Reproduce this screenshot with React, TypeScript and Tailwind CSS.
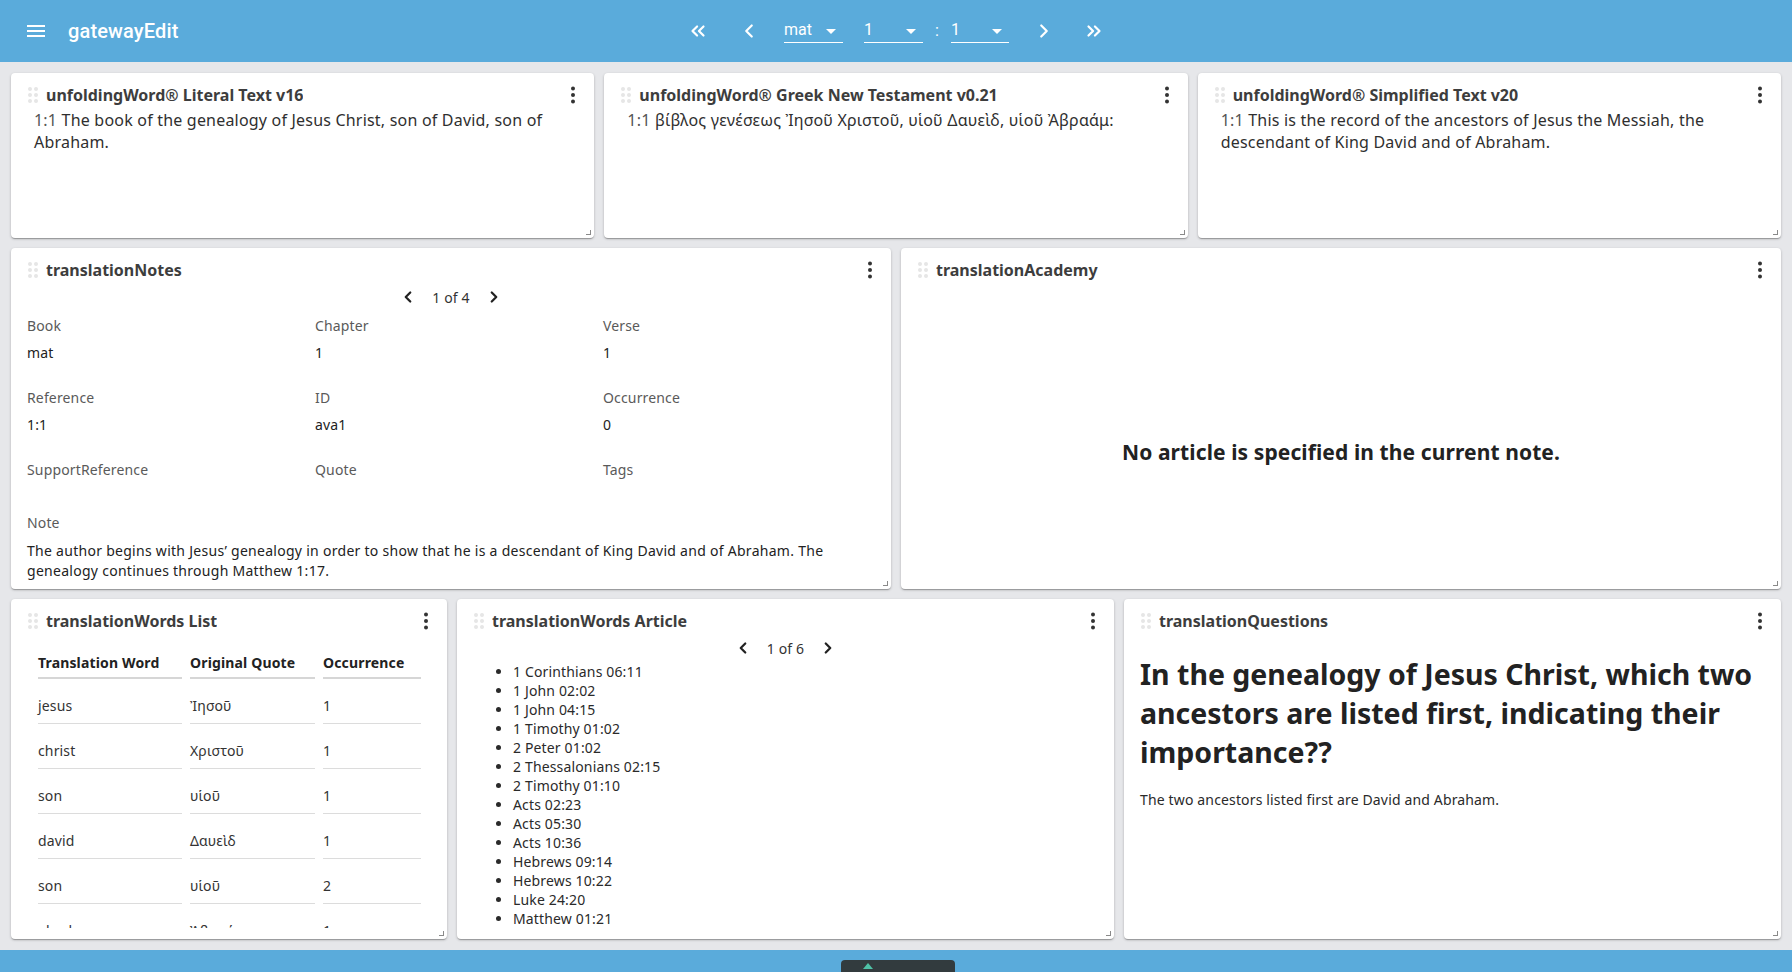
import { ChevronLeft, ChevronRight, ChevronsLeft, ChevronsRight } from 'lucide-react'
import type { ReactNode } from 'react'

const words = [
  { word: 'jesus', quote: 'Ἰησοῦ', occ: '1' },
  { word: 'christ', quote: 'Χριστοῦ', occ: '1' },
  { word: 'son', quote: 'υἱοῦ', occ: '1' },
  { word: 'david', quote: 'Δαυεὶδ', occ: '1' },
  { word: 'son', quote: 'υἱοῦ', occ: '2' },
  { word: 'abraham', quote: 'Ἀβραάμ', occ: '1' },
]

const refs = [
  '1 Corinthians 06:11',
  '1 John 02:02',
  '1 John 04:15',
  '1 Timothy 01:02',
  '2 Peter 01:02',
  '2 Thessalonians 02:15',
  '2 Timothy 01:10',
  'Acts 02:23',
  'Acts 05:30',
  'Acts 10:36',
  'Hebrews 09:14',
  'Hebrews 10:22',
  'Luke 24:20',
  'Matthew 01:21',
]

function MenuIcon() {
  return (
    <svg width="24" height="24" viewBox="0 0 24 24" fill="white">
      <path d="M3 18h18v-2H3zm0-5h18v-2H3zm0-7v2h18V6z" />
    </svg>
  )
}

function DropArrow() {
  return (
    <svg width="24" height="24" viewBox="0 0 24 24" fill="white" className="absolute right-0 top-1/2 -translate-y-1/2">
      <path d="M7 10l5 5 5-5z" />
    </svg>
  )
}

function MoreVert() {
  return (
    <svg width="24" height="24" viewBox="0 0 24 24" fill="#333">
      <circle cx="12" cy="5.5" r="2" />
      <circle cx="12" cy="12" r="2" />
      <circle cx="12" cy="18.5" r="2" />
    </svg>
  )
}

function DragHandle() {
  return (
    <div className="grid grid-cols-2 gap-[2px] shrink-0">
      {[0, 1, 2, 3, 4, 5].map((i) => (
        <span key={i} className="w-[4px] h-[4px] rounded-full bg-[#e6e6e6]" />
      ))}
    </div>
  )
}

function Select({ value, width }: { value: string; width: string }) {
  return (
    <div className={`relative h-[24px] border-b border-white flex items-center ${width}`}>
      <span className="text-[16px] leading-[20px] pb-[2px]">{value}</span>
      <DropArrow />
    </div>
  )
}

function Pager({ label }: { label: string }) {
  return (
    <div className="h-[30px] flex items-center justify-center text-[14px] tracking-[0.15px] text-[#333]">
      <span className="w-[32px] flex justify-center">
        <ChevronLeft size={18} strokeWidth={3} color="#222" />
      </span>
      <span className="px-[8px]">{label}</span>
      <span className="w-[32px] flex justify-center">
        <ChevronRight size={18} strokeWidth={3} color="#222" />
      </span>
    </div>
  )
}

function Card({
  title,
  children,
  className = '',
  pad = 'pb-[11px]',
}: {
  title: string
  children?: ReactNode
  className?: string
  pad?: string
}) {
  return (
    <div
      className={`relative bg-white rounded-[4px] shadow-[0_1px_3px_rgba(0,0,0,0.2),0_1px_1px_rgba(0,0,0,0.14),0_2px_1px_-1px_rgba(0,0,0,0.12)] flex flex-col ${pad} ${className}`}
    >
      {/* Card header */}
      <div className="h-[34px] pt-[10px] pl-[17px] pr-[9px] flex items-center shrink-0">
        <DragHandle />
        <span className="ml-[8px] text-[16px] leading-[24px] font-bold text-[#3d3d3d] truncate">{title}</span>
        <span className="ml-auto">
          <MoreVert />
        </span>
      </div>
      <div className="flex-1 min-h-0 overflow-hidden">{children}</div>
      {/* Resize handle */}
      <span className="absolute right-[3px] bottom-[3px] w-[5px] h-[5px] border-r border-b border-[#8a8a8a]" />
    </div>
  )
}

function Scripture({ text }: { text: string }) {
  return (
    <p className="pl-[23px] pr-[24px] pt-[2px] text-[16px] leading-[22px] tracking-[0.2px] text-[#2f2f2f]">
      <span className="text-[#555]">1:1</span> {text}
    </p>
  )
}

function Field({ label, value }: { label: string; value?: string }) {
  return (
    <div className={value ? 'pb-[25px]' : 'pb-[33px]'}>
      <div className="text-[14px] leading-[20px] tracking-[0.15px] text-[#5a5a5a]">{label}</div>
      {value ? <div className="mt-[7px] text-[14px] leading-[20px] tracking-[0.15px] text-[#222]">{value}</div> : null}
    </div>
  )
}

export default function App() {
  return (
    <div className="w-[1792px] h-[972px] bg-[#e6e7ea] overflow-hidden flex flex-col font-['Noto_Sans',sans-serif]">
      {/* App bar */}
      <header className="h-[62px] shrink-0 bg-[#5aabdb] grid grid-cols-[1fr_auto_1fr] items-center text-white font-['Roboto',sans-serif]">
        <div className="flex items-center pl-[24px]">
          <MenuIcon />
          <span className="ml-[20px] text-[20px] font-medium tracking-[0.15px]">gatewayEdit</span>
        </div>
        <nav className="flex items-center">
          <span className="w-[48px] h-[48px] flex items-center justify-center">
            <ChevronsLeft size={22} strokeWidth={2.4} />
          </span>
          <span className="ml-[3px] w-[48px] h-[48px] flex items-center justify-center">
            <ChevronLeft size={22} strokeWidth={2.4} />
          </span>
          <div className="ml-[11px]">
            <Select value="mat" width="w-[59px]" />
          </div>
          <div className="ml-[21px]">
            <Select value="1" width="w-[59px]" />
          </div>
          <span className="w-[28px] text-center text-[16px]">:</span>
          <Select value="1" width="w-[58px]" />
          <span className="ml-[11px] w-[48px] h-[48px] flex items-center justify-center">
            <ChevronRight size={22} strokeWidth={2.4} />
          </span>
          <span className="ml-[2px] w-[48px] h-[48px] flex items-center justify-center">
            <ChevronsRight size={22} strokeWidth={2.4} />
          </span>
        </nav>
        <div />
      </header>

      <main className="flex flex-col gap-[10px] px-[11px] pt-[11px] shrink-0">
        {/* Scripture panes */}
        <div className="h-[165px] flex gap-[10px]">
          <Card title="unfoldingWord® Literal Text v16" className="flex-1">
            <Scripture text="The book of the genealogy of Jesus Christ, son of David, son of Abraham." />
          </Card>
          <Card title="unfoldingWord® Greek New Testament v0.21" className="flex-1">
            <Scripture text="βίβλος γενέσεως Ἰησοῦ Χριστοῦ, υἱοῦ Δαυεὶδ, υἱοῦ Ἀβραάμ:" />
          </Card>
          <Card title="unfoldingWord® Simplified Text v20" className="flex-1">
            <Scripture text="This is the record of the ancestors of Jesus the Messiah, the descendant of King David and of Abraham." />
          </Card>
        </div>

        {/* Notes and academy */}
        <div className="h-[341px] flex gap-[10px]">
          <Card title="translationNotes" className="flex-1" pad="pb-[3px]">
            <Pager label="1 of 4" />
            <div className="pl-[16px] pt-[4px] grid grid-cols-[288px_288px_288px]">
              <Field label="Book" value="mat" />
              <Field label="Chapter" value="1" />
              <Field label="Verse" value="1" />
              <Field label="Reference" value="1:1" />
              <Field label="ID" value="ava1" />
              <Field label="Occurrence" value="0" />
              <Field label="SupportReference" />
              <Field label="Quote" />
              <Field label="Tags" />
            </div>
            <div className="pl-[16px] pr-[40px]">
              <div className="text-[14px] leading-[20px] tracking-[0.15px] text-[#5a5a5a]">Note</div>
              <p className="mt-[8px] text-[14px] leading-[20px] tracking-[0.28px] text-[#222]">
                The author begins with Jesus’ genealogy in order to show that he is a descendant of King David and of Abraham. The genealogy continues through Matthew 1:17.
              </p>
            </div>
          </Card>
          <Card title="translationAcademy" className="flex-1">
            <div className="h-full flex items-center justify-center pt-[46px]">
              <h6 className="text-[21px] font-bold tracking-[0.1px] text-[#222]">No article is specified in the current note.</h6>
            </div>
          </Card>
        </div>

        {/* Words and questions */}
        <div className="h-[340px] flex gap-[10px]">
          <Card title="translationWords List" className="w-[436px] shrink-0">
            <div className="pl-[19px] pt-[4px]">
              <table className="border-separate border-spacing-[8px] text-[14px] leading-[20px] tracking-[0.15px] text-left">
                <thead>
                  <tr>
                    <th className="w-[144px] p-0 pt-[8px] pb-[4px] border-b-2 border-[#d6d6d6] font-bold text-[#222]">Translation Word</th>
                    <th className="w-[125px] p-0 pt-[8px] pb-[4px] border-b-2 border-[#d6d6d6] font-bold text-[#222]">Original Quote</th>
                    <th className="w-[98px] p-0 pt-[8px] pb-[4px] border-b-2 border-[#d6d6d6] font-bold text-[#222]">Occurrence</th>
                  </tr>
                </thead>
                <tbody>
                  {words.map((w, i) => (
                    <tr key={i}>
                      <td className="p-0 pt-[9px] pb-[7px] border-b border-[#dcdcdc] text-[#333]">{w.word}</td>
                      <td className="p-0 pt-[9px] pb-[7px] border-b border-[#dcdcdc] text-[#333]">{w.quote}</td>
                      <td className="p-0 pt-[9px] pb-[7px] border-b border-[#dcdcdc] text-[#333]">{w.occ}</td>
                    </tr>
                  ))}
                </tbody>
              </table>
            </div>
          </Card>
          <Card title="translationWords Article" className="flex-1">
            <Pager label="1 of 6" />
            <ul className="-mt-[1px] list-disc pl-[56px] text-[14px] leading-[19px] tracking-[0.15px] text-[#2a2a2a]">
              {refs.map((r) => (
                <li key={r}>{r}</li>
              ))}
            </ul>
          </Card>
          <Card title="translationQuestions" className="flex-1">
            <div className="px-[16px] pt-[22px]">
              <h1 className="text-[28.5px] leading-[39px] font-bold text-[#222]">
                In the genealogy of Jesus Christ, which two ancestors are listed first, indicating their importance??
              </h1>
              <p className="mt-[18px] text-[14px] leading-[20px] tracking-[0.15px] text-[#2a2a2a]">The two ancestors listed first are David and Abraham.</p>
            </div>
          </Card>
        </div>
      </main>

      {/* Bottom bar */}
      <footer className="mt-[11px] flex-1 bg-[#5aabdb] flex justify-center items-end">
        <div className="ml-[4px] w-[114px] h-[12px] bg-[#323b3e] rounded-t-[4px] pl-[22px] pt-[3px]">
          <svg width="10" height="9" viewBox="0 0 10 9">
            <path d="M5 0 L10 6 L0 6 Z" fill="#4fc1a6" />
          </svg>
        </div>
      </footer>
    </div>
  )
}
